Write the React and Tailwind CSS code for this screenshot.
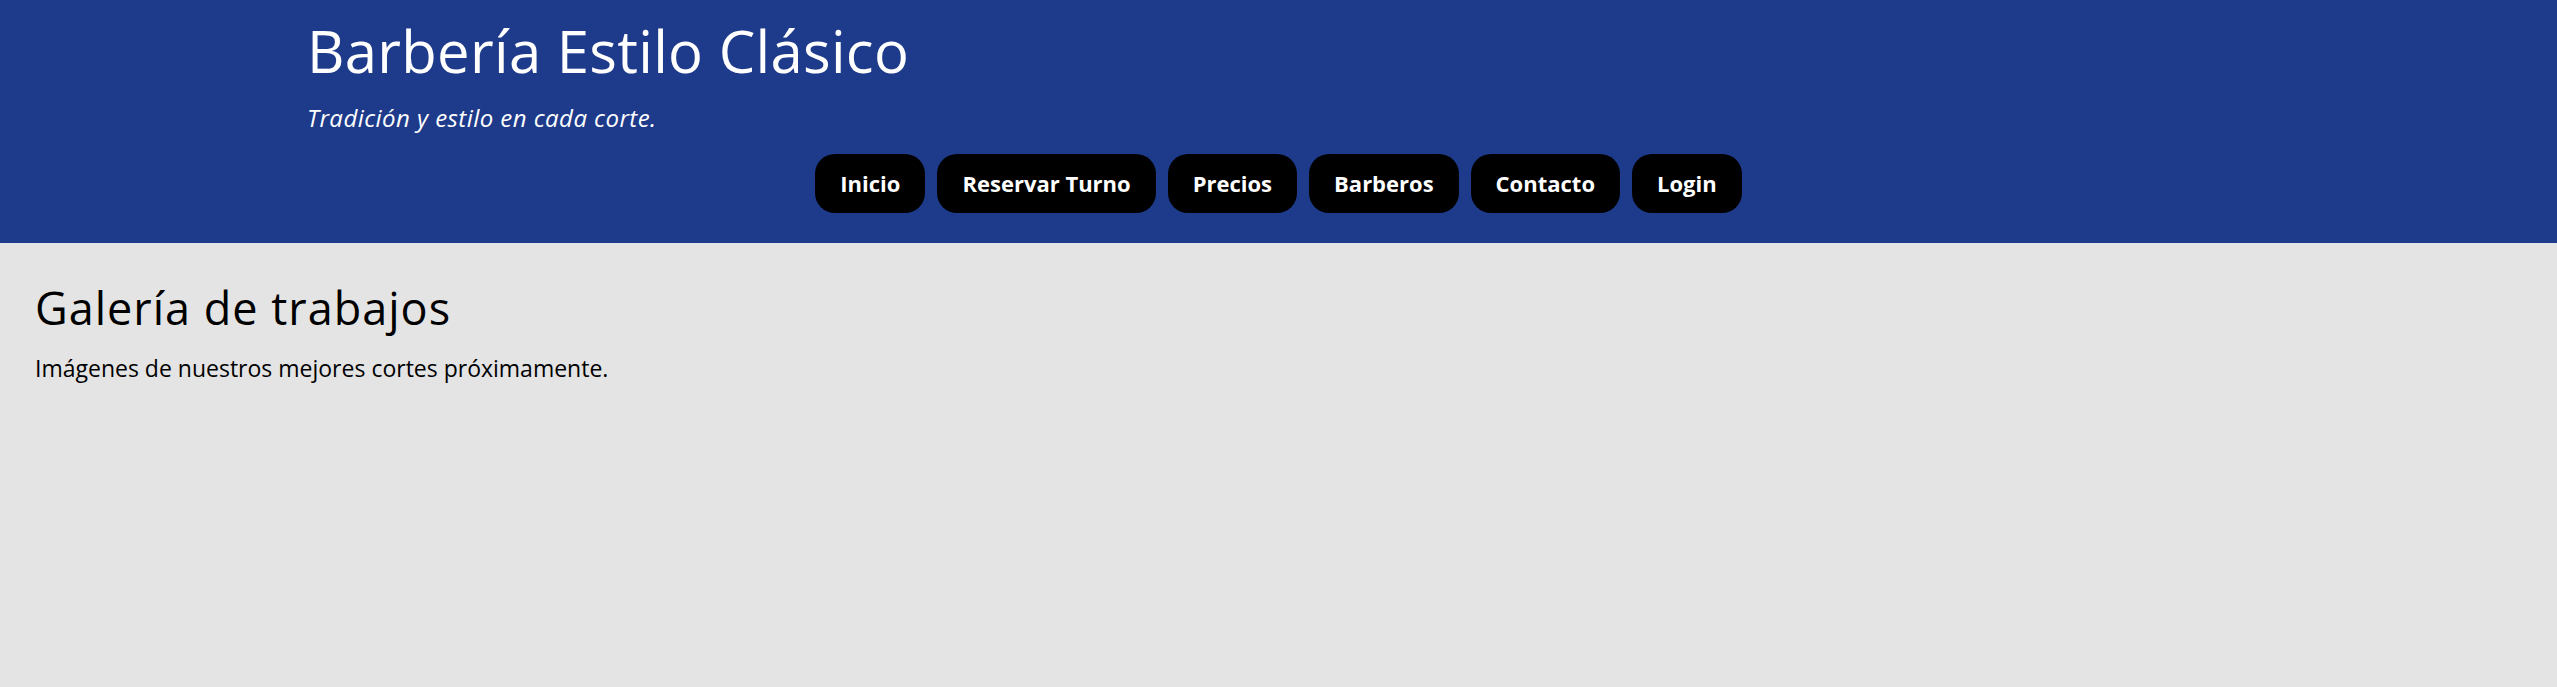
const links = ['Inicio', 'Reservar Turno', 'Precios', 'Barberos', 'Contacto', 'Login'];

const App = () => {
  return (
    <div className="min-h-screen bg-[#e4e4e4] font-['Open_Sans','Liberation_Sans',sans-serif] text-black">
      {/* Header */}
      <header className="bg-[#1e3a8a] text-white pt-[16px] pb-[30px]">
        <div className="pl-[307px]">
          <h1 className="text-[58px] leading-[70px] font-normal tracking-[0.3px]">Barbería Estilo Clásico</h1>
          <p className="mt-[17px] text-[24px] leading-[29px] italic tracking-[0.45px]">Tradición y estilo en cada corte.</p>
        </div>
        <nav className="mt-[22px] flex justify-center gap-[12px]">
          {links.map((label) => (
            <a
              key={label}
              href="#"
              className="flex h-[59px] items-center rounded-[20px] bg-black px-[25px] text-[22px] font-bold text-white"
            >
              {label}
            </a>
          ))}
        </nav>
      </header>

      {/* Gallery */}
      <main className="px-[35px] pt-[38px]">
        <h2 className="text-[45px] leading-[54px] font-normal tracking-[1px]">Galería de trabajos</h2>
        <p className="mt-[19px] text-[23px] leading-[28px]">Imágenes de nuestros mejores cortes próximamente.</p>
      </main>
    </div>
  );
};

export default App;
